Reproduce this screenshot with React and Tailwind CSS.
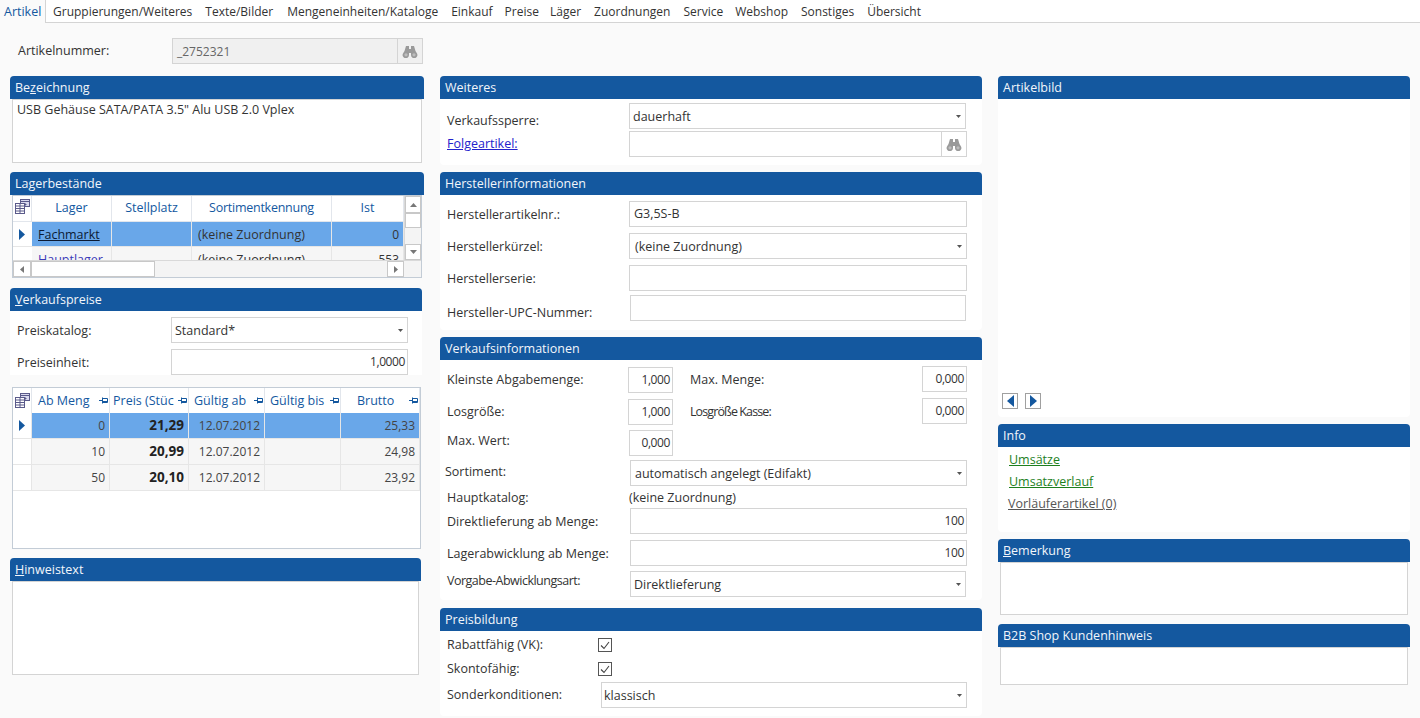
import React from "react";

const Bino = ({ className = "" }) => (
  <svg width="16" height="13" viewBox="0 0 16 13" className={className}>
    <g fill="#9a9a9a">
      <path d="M4 1h3v3h2V1h3l1.500 5 1.500 2.500a3.200 3.200 0 1 1-6 1.500V8H7v2a3.200 3.200 0 1 1-6-1.500L2.500 6z" />
    </g>
    <circle cx="4" cy="9.800" r="1.600" fill="#bdbdbd" />
    <circle cx="12" cy="9.800" r="1.600" fill="#bdbdbd" />
  </svg>
);

const Caret = () => (
  <svg width="5" height="3" viewBox="0 0 5 3" className="absolute right-[4px] top-[11px]">
    <path d="M0 0h5L2.500 3z" fill="#555" />
  </svg>
);

const RowArrow = () => (
  <svg width="6" height="11" viewBox="0 0 6 11">
    <path d="M0 0l6 5.500L0 11z" fill="#14589f" />
  </svg>
);

const CornerIcon = () => (
  <svg width="15" height="15" viewBox="0 0 15 15" fill="none" stroke="#5a5a8a" strokeWidth="1">
    <rect x="5.500" y="0.500" width="9" height="7" fill="#d9d9ee" />
    <path d="M5.500 2.500h9M10 4v3M8.500 5.500h3" />
    <rect x="0.500" y="4.500" width="9" height="5" fill="#fff" />
    <rect x="0.500" y="9.500" width="9" height="5" fill="#fff" />
    <path d="M0.500 7h9M0.500 12h9M5 4.500v10" />
  </svg>
);

const Pin = () => (
  <svg width="9" height="7" viewBox="0 0 9 7" fill="none" stroke="#14589f" strokeWidth="1">
    <path d="M0 3.500h3M3.500 0.500v6M3.500 1.500h5v4h-5" />
    <path d="M3.500 4.500h5" />
  </svg>
);

const Panel = ({ title, u, rest, w = "w-full", body = "", children }) => (
  <section className={w}>
    <h2 className="h-[23px] bg-[#14589f] rounded-t-[4px] text-[#f2f6fb] text-[12.500px] leading-[23px] pl-[5px] font-normal">
      {u ? (
        <>
          {title}
          <span className="underline">{u}</span>
          {rest}
        </>
      ) : (
        title
      )}
    </h2>
    <div className={body}>{children}</div>
  </section>
);

const Box = ({ className = "", children }) => (
  <div className={"relative h-[26px] border border-[#d4d4d4] bg-white text-[12.500px] leading-[24px] px-[4px] " + className}>
    {children}
  </div>
);

const NumBox = ({ className = "", children }) => (
  <div className={"h-[26px] border border-[#d4d4d4] bg-white text-[12px] leading-[24px] text-right pr-[2px] tracking-[-0.4px] " + className}>
    {children}
  </div>
);

const Select = ({ className = "", children }) => (
  <div className={"relative h-[26px] border border-[#d4d4d4] bg-white text-[12.500px] leading-[26px] px-[4px] " + className}>
    {children}
    <Caret />
  </div>
);

const Lookup = ({ className = "", text = "", grey }) => (
  <div className={"flex h-[26px] border border-[#d4d4d4] text-[12px] leading-[25px] " + (grey ? "bg-[#f0f0f0] text-[#666]" : "bg-white") + " " + className}>
    <div className="flex-1 px-[4px]">{text}</div>
    <div className="w-[25px] border-l border-[#d4d4d4] flex items-center justify-center">
      <Bino />
    </div>
  </div>
);

const Row = ({ label, className = "", labelClass = "", children }) => (
  <div className={"flex items-start " + className}>
    <div className={"text-[12.500px] leading-[17px] shrink-0 " + labelClass}>{label}</div>
    {children}
  </div>
);

const priceRows = [
  ["0", "21,29", "12.07.2012", "25,33", true],
  ["10", "20,99", "12.07.2012", "24,98"],
  ["50", "20,10", "12.07.2012", "23,92"],
];

const Hd = ({ w, children, pin }) => (
  <div className={"flex items-center justify-center h-full border-r border-[#e2e6ec] text-[#14589f] overflow-hidden relative " + w}>
    <span>{children}</span>
    {pin && (
      <span className="absolute right-[1px] top-[9px]">
        <Pin />
      </span>
    )}
  </div>
);

const Cell = ({ w, children, className = "" }) => (
  <div className={"h-full border-r border-[#e6e6e6] pl-[6px] pr-[4px] leading-[25px] overflow-hidden whitespace-nowrap " + w + " " + className}>
    {children}
  </div>
);

function LagerGrid() {
  return (
    <div className="mx-[2px] w-[410px] h-[83px] border border-[#c3ccd6] bg-white text-[12.500px] flex flex-col">
      <div className="flex-1 flex overflow-hidden">
        <div className="w-[391px] flex flex-col overflow-hidden">
          <div className="flex h-[26px] shrink-0 border-b border-[#e2e6ec]">
            <div className="w-[19px] border-r border-[#e2e6ec] pt-[3px] pl-[2px]">
              <CornerIcon />
            </div>
            <Hd w="w-[80px]">Lager</Hd>
            <Hd w="w-[80px]">Stellplatz</Hd>
            <Hd w="w-[140px] tracking-[-0.25px]">Sortimentkennung</Hd>
            <Hd w="w-[72px]">Ist</Hd>
          </div>
          <div className="flex h-[25px] shrink-0 border-b border-[#e6e6e6]">
            <div className="w-[19px] flex items-center justify-center pr-[2px]">
              <RowArrow />
            </div>
            <Cell w="w-[80px] bg-[#69a7e9] underline text-[#0b1a33]">Fachmarkt</Cell>
            <Cell w="w-[80px] bg-[#69a7e9]" />
            <Cell w="w-[140px] bg-[#69a7e9]">(keine Zuordnung)</Cell>
            <Cell w="w-[72px] bg-[#69a7e9] text-right text-[12px]">0</Cell>
          </div>
          <div className="flex h-[25px] shrink-0">
            <div className="w-[19px]" />
            <Cell w="w-[80px] bg-[#f6f6f6] underline text-[#3a3ab8]">Hauptlager</Cell>
            <Cell w="w-[80px] bg-[#f6f6f6]" />
            <Cell w="w-[140px] bg-[#f6f6f6]">(keine Zuordnung)</Cell>
            <Cell w="w-[72px] bg-[#f6f6f6] text-right text-[12px]">553</Cell>
          </div>
        </div>
        <div className="w-[17px] flex flex-col items-stretch border-l border-[#d9d9d9] bg-[#f4f4f4]">
          <div className="h-[17px] border border-[#c8c8c8] bg-white flex items-center justify-center">
            <svg width="7" height="4" viewBox="0 0 7 4"><path d="M3.500 0L7 4H0z" fill="#777" /></svg>
          </div>
          <div className="h-[15px] border border-[#c8c8c8] bg-white" />
          <div className="flex-1" />
          <div className="h-[16px] border border-[#c8c8c8] bg-white flex items-center justify-center">
            <svg width="7" height="4" viewBox="0 0 7 4"><path d="M0 0h7L3.500 4z" fill="#777" /></svg>
          </div>
        </div>
      </div>
      <div className="h-[17px] flex bg-[#f4f4f4] border-t border-[#d9d9d9] shrink-0">
        <div className="w-[18px] border border-[#c8c8c8] bg-white flex items-center justify-center">
          <svg width="4" height="7" viewBox="0 0 4 7"><path d="M4 0v7L0 3.500z" fill="#777" /></svg>
        </div>
        <div className="w-[124px] border border-[#c8c8c8] bg-white" />
        <div className="flex-1" />
        <div className="w-[17px] border border-[#c8c8c8] bg-white flex items-center justify-center mr-[17px]">
          <svg width="4" height="7" viewBox="0 0 4 7"><path d="M0 0v7l4-3.500z" fill="#777" /></svg>
        </div>
      </div>
    </div>
  );
}

function PriceGrid() {
  return (
    <div className="ml-[2px] mt-[12px] w-[409px] h-[162px] border border-[#c3ccd6] bg-white text-[12.500px]">
      <div className="flex h-[25px]">
        <div className="w-[19px] border-r border-[#e2e6ec] pt-[5px] pl-[2px]">
          <CornerIcon />
        </div>
        <Hd w="w-[78px] !justify-start pl-[6px] pt-[2px]" pin>Ab Meng</Hd>
        <Hd w="w-[79px] !justify-start pl-[3px] pt-[2px]" pin>Preis (Stüc</Hd>
        <Hd w="w-[76px] !justify-start pl-[5px] pt-[2px]" pin>Gültig ab</Hd>
        <Hd w="w-[76px] !justify-start pl-[5px] pt-[2px]" pin>Gültig bis</Hd>
        <Hd w="w-[79px] !justify-start pl-[16px] pt-[2px]" pin>Brutto</Hd>
      </div>
      {priceRows.map(([a, p, d, b, sel]) => {
        const bg = sel ? "bg-[#69a7e9]" : "bg-[#f6f6f6]";
        return (
          <div key={a} className="flex h-[26px] border-b border-[#e6e6e6] text-[#444] text-[12px]">
            <div className="w-[19px] border-r border-[#e6e6e6] flex items-center justify-center">
              {sel && <RowArrow />}
            </div>
            <Cell w={"w-[78px] text-right " + bg}>{a}</Cell>
            <Cell w={"w-[79px] text-right font-bold text-[13.500px] text-[#222] " + bg}>{p}</Cell>
            <Cell w={"w-[76px] text-right " + bg}>{d}</Cell>
            <Cell w={"w-[76px] " + bg} />
            <Cell w={"w-[79px] text-right " + bg}>{b}</Cell>
          </div>
        );
      })}
    </div>
  );
}

const tabs = [
  ["Gruppierungen/Weiteres", ""],
  ["Texte/Bilder", ""],
  ["Mengeneinheiten/Kataloge", "ml-[1px]"],
  ["Einkauf", ""],
  ["Preise", "-ml-[1px]"],
  ["Läger", "-ml-[2px]"],
  ["Zuordnungen", ""],
  ["Service", ""],
  ["Webshop", "-ml-[1px]"],
  ["Sonstiges", ""],
  ["Übersicht", ""],
];

export default function App() {
  return (
    <div className="w-[1420px] h-[718px] overflow-hidden bg-[#fafafa] text-[#333] text-[12.500px] font-['Open_Sans','Noto_Sans',sans-serif]">
      <nav className="flex h-[23px] border-b border-[#d4d4d4] bg-white leading-[24px] text-[12px]">
        <a className="w-[46px] -mb-[1px] h-[23px] pl-[4px] border-r border-[#d4d4d4] bg-[#fafafa] text-[#14589f] text-[12.500px]">Artikel</a>
        <div className="flex gap-[13px] pl-[7px]">
          {tabs.map(([t, c]) => (
            <a key={t} className={"whitespace-nowrap " + c}>{t}</a>
          ))}
        </div>
      </nav>

      <div className="flex items-center h-[26px] mt-[15px] pl-[18px]">
        <div className="w-[154px]">Artikelnummer:</div>
        <Lookup className="w-[251px]" text="_2752321" grey />
      </div>

      <div className="flex mt-[12px] pl-[10px]">
        <div className="w-[414px] flex flex-col">
          <Panel title="Be" u="z" rest="eichnung">
            <div className="mx-[2px] w-[410px] h-[64px] border border-[#d4d4d4] bg-white pl-[4px] leading-[20px]">
              USB Gehäuse SATA/PATA 3.5" Alu USB 2.0 Vplex
            </div>
          </Panel>
          <div className="mt-[9px]">
            <Panel title="Lagerbestände">
              <LagerGrid />
            </Panel>
          </div>
          <div className="mt-[10px]">
            <Panel title="" u="V" rest="erkaufspreise" w="w-[412px]">
              <div className="bg-white h-[6px]" />
              <Row label="Preiskatalog:" className="pl-[7px] bg-white" labelClass="w-[154px] pt-[5px]">
                <Select className="w-[237px] pl-[3px]">Standard*</Select>
              </Row>
              <Row label="Preiseinheit:" className="pl-[7px] pt-[6px] bg-white" labelClass="w-[154px] pt-[5px]">
                <NumBox className="w-[237px]">1,0000</NumBox>
              </Row>
              <PriceGrid />
            </Panel>
          </div>
          <div className="mt-[9px]">
            <Panel title="" u="H" rest="inweistext" w="w-[411px]">
              <div className="mx-[2px] w-[407px] h-[94px] border border-[#d4d4d4] bg-white" />
            </Panel>
          </div>
        </div>

        <div className="w-[542px] ml-[16px] flex flex-col">
          <Panel title="Weiteres" body="bg-white h-[66px] rounded-b-[4px] pl-[7px] pt-[4px]">
            <Row label="Verkaufssperre:" labelClass="w-[182px] pt-[9px]">
              <Select className="w-[337px] pl-[3px]">dauerhaft</Select>
            </Row>
            <Row label={<span className="text-[#2222cc] underline">Folgeartikel:</span>} className="mt-[2px]" labelClass="w-[182px] pt-[4px]">
              <Lookup className="w-[338px]" />
            </Row>
          </Panel>
          <div className="mt-[7px]">
            <Panel title="Herstellerinformationen" body="bg-white h-[135px] rounded-b-[4px] pl-[7px] pt-[6px]">
              <Row label="Herstellerartikelnr.:" labelClass="w-[182px] pt-[5px]">
                <Box className="w-[338px]">G3,5S-B</Box>
              </Row>
              <Row label="Herstellerkürzel:" className="mt-[6px]" labelClass="w-[182px] pt-[5px]">
                <Select className="w-[338px] pl-[5px]">(keine Zuordnung)</Select>
              </Row>
              <Row label="Herstellerserie:" className="mt-[6px]" labelClass="w-[182px] pt-[5px]">
                <Box className="w-[338px]" />
              </Row>
              <Row label="Hersteller-UPC-Nummer:" className="mt-[4px]" labelClass="w-[183px] pt-[9px]">
                <Box className="w-[336px]" />
              </Row>
            </Panel>
          </div>
          <div className="mt-[7px]">
            <Panel title="Verkaufsinformationen" body="bg-white h-[240px] rounded-b-[4px] pl-[7px] pt-[6px]">
              <div className="flex items-start">
                <Row label="Kleinste Abgabemenge:" labelClass="w-[181px] pt-[4px]" className="mt-[1px]">
                  <NumBox className="w-[45px]">1,000</NumBox>
                </Row>
                <div className="ml-[17px] w-[232px] pt-[5px] leading-[17px]">Max. Menge:</div>
                <NumBox className="w-[45px]">0,000</NumBox>
              </div>
              <div className="flex items-start mt-[5px]">
                <Row label="Losgröße:" labelClass="w-[181px] pt-[4px]" className="mt-[1px]">
                  <NumBox className="w-[45px]">1,000</NumBox>
                </Row>
                <div className="ml-[17px] w-[232px] pt-[5px] leading-[17px] tracking-[-0.9px]">Losgröße Kasse:</div>
                <NumBox className="w-[45px]">0,000</NumBox>
              </div>
              <Row label="Max. Wert:" className="mt-[5px]" labelClass="w-[182px] pt-[2px]">
                <NumBox className="w-[44px]">0,000</NumBox>
              </Row>
              <Row label="Sortiment:" className="mt-[4px] -ml-[2px]" labelClass="w-[185px] pt-[3px]">
                <Select className="w-[337px]">automatisch angelegt (Edifakt)</Select>
              </Row>
              <Row label="Hauptkatalog:" className="mt-[3px]" labelClass="w-[182px]">
                <div className="leading-[17px]">(keine Zuordnung)</div>
              </Row>
              <Row label="Direktlieferung ab Menge:" className="mt-[2px]" labelClass="w-[183px] pt-[5px]">
                <NumBox className="w-[337px]">100</NumBox>
              </Row>
              <Row label="Lagerabwicklung ab Menge:" className="mt-[6px]" labelClass="w-[183px] pt-[5px]">
                <NumBox className="w-[337px]">100</NumBox>
              </Row>
              <Row label="Vorgabe-Abwicklungsart:" className="mt-[5px]" labelClass="w-[183px] pt-[1px] tracking-[-0.5px]">
                <Select className="w-[336px] pl-[3px]">Direktlieferung</Select>
              </Row>
            </Panel>
          </div>
          <div className="mt-[8px]">
            <Panel title="Preisbildung" body="bg-white h-[85px] rounded-b-[4px] pl-[7px] pt-[6px]">
              <div className="flex items-center h-[16px]">
                <div className="w-[151px]">Rabattfähig (VK):</div>
                <Check />
              </div>
              <div className="flex items-center h-[16px] mt-[8px]">
                <div className="w-[151px]">Skontofähig:</div>
                <Check />
              </div>
              <Row label="Sonderkonditionen:" className="mt-[5px]" labelClass="w-[154px] pt-[4px]">
                <Select className="w-[366px] pl-[2px]">klassisch</Select>
              </Row>
            </Panel>
          </div>
        </div>

        <div className="w-[412px] ml-[16px] flex flex-col">
          <Panel title="Artikelbild" body="bg-white h-[318px] rounded-b-[4px] pl-[4px] pt-[294px] flex gap-[7px]">
            <Nav dir="l" />
            <Nav dir="r" />
          </Panel>
          <div className="mt-[7px]">
            <Panel title="Info" body="bg-white h-[85px] rounded-b-[4px] pl-[11px] pt-[2px] flex flex-col items-start leading-[22px]">
              <a className="underline text-[#1e7f1e]">Umsätze</a>
              <a className="underline text-[#1e7f1e]">Umsatzverlauf</a>
              <a className="underline text-[#555] -ml-[1px]">Vorläuferartikel (0)</a>
            </Panel>
          </div>
          <div className="mt-[7px]">
            <Panel title="" u="B" rest="emerkung">
              <div className="mx-[2px] w-[408px] h-[53px] border border-[#d4d4d4] bg-white" />
            </Panel>
          </div>
          <div className="mt-[9px]">
            <Panel title="B2B Shop Kundenhinweis">
              <div className="mx-[2px] w-[408px] h-[38px] border border-[#d4d4d4] bg-white" />
            </Panel>
          </div>
        </div>
      </div>
    </div>
  );
}

function Check() {
  return (
    <div className="w-[14px] h-[14px] border border-[#555] bg-white flex items-center justify-center">
      <svg width="10" height="9" viewBox="0 0 10 9" fill="none" stroke="#444" strokeWidth="1.100">
        <path d="M1 4.500l3 3L9 1" />
      </svg>
    </div>
  );
}

function Nav({ dir }) {
  return (
    <div className="w-[16px] h-[16px] border border-[#a0a0a0] bg-white flex items-center justify-center">
      <svg width="7" height="12" viewBox="0 0 7 12">
        <path d={dir === "l" ? "M7 0v12L0 6z" : "M0 0v12l7-6z"} fill="#14589f" />
      </svg>
    </div>
  );
}
